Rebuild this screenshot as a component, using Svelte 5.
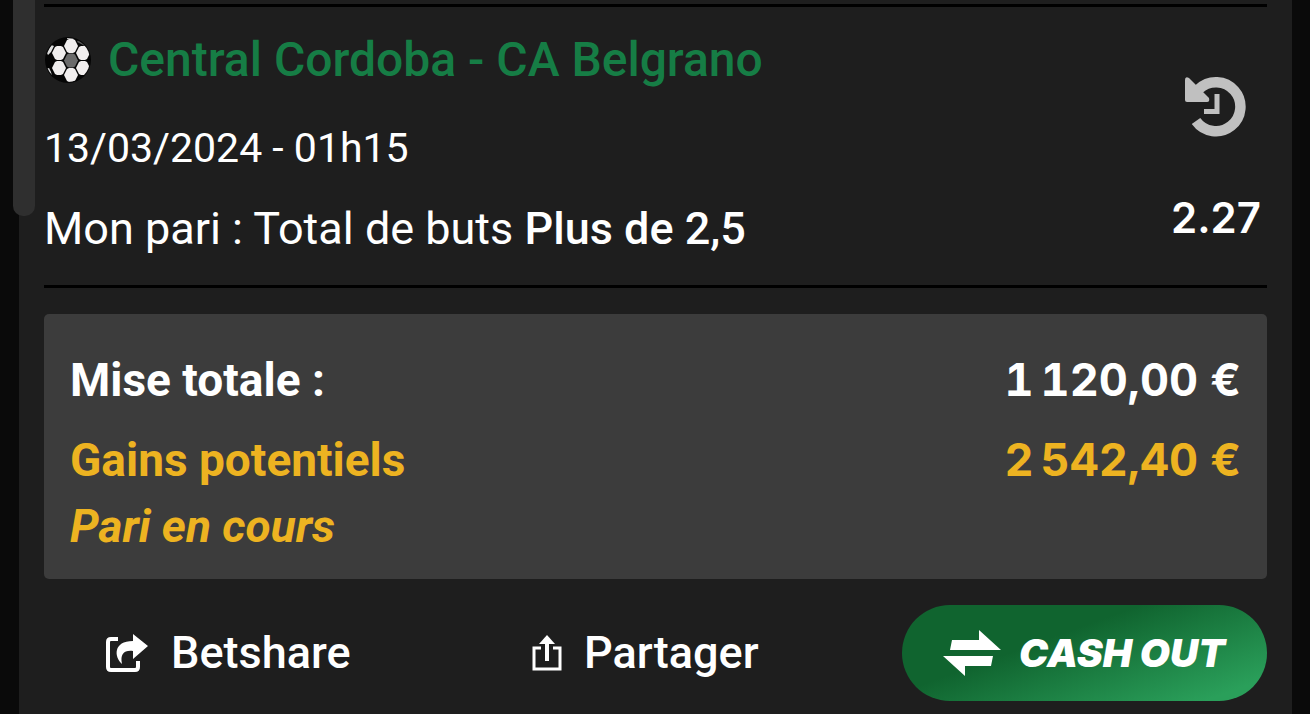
<script>
  const bet = {
    teams: 'Central Cordoba - CA Belgrano',
    date: '13/03/2024 - 01h15',
    market: 'Mon pari : Total de buts',
    pick: 'Plus de 2,5',
    odds: '2.27',
    stake: '1\u2009120,00 €',
    gains: '2\u2009542,40 €',
    status: 'Pari en cours'
  };
  const panels = [[27, 10], [27, 39], [39, 17], [39, 32], [15, 17], [15, 32]];
</script>

<div class="page">
  <div class="thumb"></div>
  <main class="ticket">
    <section class="event">
      <div class="details">
        <h1>
          <svg class="ball" viewBox="0 0 48 48" aria-hidden="true">
            <clipPath id="ball-edge"><circle cx="24" cy="24" r="22" /></clipPath>
            <circle cx="24" cy="24" r="23" fill="#050505" />
            <g clip-path="url(#ball-edge)">
              <path d="M23 1h9v2h-9z" fill="#bbb" />
              <path d="M34 4l8 5 2 5-5-5-6-3z" fill="#555" />
              <path d="M3 17l4-8 3 1-3 6-3 3zM2 33l3-1 2 4 1 4-3-1z" fill="#ddd" />
              {#each panels as [x, y]}
                <path d="M{x - 7} {y}l3-6 2-1h4l2 1 3 6-3 6-2 1h-4l-2-1z" fill="#f1eeee" />
              {/each}
              <path d="M20 24.500l3-6 2-1h4l2 1 3 6-3 6-2 1h-4l-2-1z" fill="#6b6b6b" />
            </g>
          </svg>
          <span>{bet.teams}</span>
        </h1>
        <p class="date">{bet.date}</p>
        <p class="pick">{bet.market} <strong>{bet.pick}</strong></p>
      </div>
      <div class="side">
        <svg class="history" viewBox="0 0 62 62" aria-label="En attente" role="img">
          <path d="M15 14A24.500 24.500 0 1 1 12 46" fill="none" stroke="#c0c0c0" stroke-width="10.500" />
          <path d="M1 5q0-4 4-2l20 20q1 4-2 4H3q-2 0-2-2z" fill="#c0c0c0" />
          <path d="M33 19v17.500H20" fill="none" stroke="#c0c0c0" stroke-width="5" />
        </svg>
        <span class="odds">{bet.odds}</span>
      </div>
    </section>

    <dl class="summary">
      <div class="row">
        <dt>Mise totale :</dt>
        <dd>{bet.stake}</dd>
      </div>
      <div class="row gold">
        <dt>Gains potentiels</dt>
        <dd>{bet.gains}</dd>
      </div>
      <div class="status gold">{bet.status}</div>
    </dl>

    <footer class="actions">
      <button class="plain">
        <svg class="share" viewBox="0 0 44 40" aria-hidden="true">
          <path d="M13 6H6q-3 0-3 3v25q0 3 3 3h24q3 0 3-3v-6" fill="none" stroke="#fff" stroke-width="4" />
          <path d="M28 1l15 12-15 13v-8c-9-1-13 3-11 13C9 24 8 8 28 8z" fill="#fff" />
        </svg>
        Betshare
      </button>
      <button class="plain">
        <svg class="upload" viewBox="0 0 30 38" aria-hidden="true">
          <path d="M9 14H2v21h26V14h-7" fill="none" stroke="#fff" stroke-width="3" />
          <path d="M15 27V5" fill="none" stroke="#fff" stroke-width="4" />
          <path d="M15 1l8 9H7z" fill="#fff" />
        </svg>
        Partager
      </button>
      <button class="cashout">
        <svg class="swap" viewBox="0 0 58 48" aria-hidden="true">
          <path d="M9 11h27V1l22 20H7zM0 27h50l-2 10H22v10z" fill="#fff" />
        </svg>
        CASH OUT
      </button>
    </footer>
  </main>
</div>

<style>
  :global(body) {
    margin: 0;
    background: #0a0a0a;
  }
  .page {
    position: relative;
    min-height: 100vh;
    box-sizing: border-box;
    display: flex;
    padding: 0 18px 0 19px;
    overflow: hidden;
    font-family: Roboto, "Liberation Sans", sans-serif;
    color: #fff;
  }
  .thumb {
    position: absolute;
    left: 13px;
    top: 0;
    width: 22px;
    height: 216px;
    border-radius: 0 0 10px 10px;
    background: #2f2f2f;
  }
  .ticket {
    flex: 1;
    padding: 4px 25px 12px;
    background: #1e1e1e;
  }
  .event {
    display: flex;
    justify-content: space-between;
    border-top: 3px solid #000;
    border-bottom: 3px solid #000;
    padding: 23px 0 30px;
  }
  h1,
  p,
  dl,
  dd {
    margin: 0;
  }
  .details {
    display: flex;
    flex-direction: column;
    gap: 28px;
  }
  h1 {
    display: flex;
    align-items: center;
    gap: 16px;
    font-size: 48px;
    line-height: 60px;
    font-weight: 500;
    color: #167d45;
  }
  .ball {
    width: 48px;
    height: 48px;
  }
  .date {
    margin-top: 3px;
    font-size: 41px;
    line-height: 54px;
  }
  .pick {
    font-size: 45px;
    line-height: 52px;
  }
  strong {
    font-weight: 500;
  }
  .side {
    display: flex;
    flex-direction: column;
    align-items: flex-end;
    gap: 57px;
    padding: 45px 6px 0 0;
  }
  .history {
    width: 62px;
    height: 62px;
    margin-right: 15px;
  }
  .odds {
    font: 600 42px/48px Inter, sans-serif;
  }
  .summary {
    margin-top: 26px;
    padding: 36px 26px 23px;
    border-radius: 5px;
    background: #3c3c3c;
    font-size: 46px;
    line-height: 60px;
    font-weight: 700;
  }
  .row {
    display: flex;
    justify-content: space-between;
    margin-bottom: 20px;
  }
  dd {
    font-family: Inter, sans-serif;
    font-size: 45px;
    font-variant-numeric: tabular-nums;
  }
  .gold {
    color: #edb321;
    margin-bottom: 6px;
  }
  .status {
    font-style: italic;
    margin: 0;
  }
  .actions {
    display: grid;
    grid-template-columns: 427fr 370fr auto;
    align-items: center;
    margin-top: 26px;
    padding-left: 61px;
  }
  button {
    display: flex;
    align-items: center;
    border: 0;
    padding: 0;
    background: none;
    color: #fff;
    font: 500 45px/60px Roboto, sans-serif;
  }
  .plain {
    gap: 22px;
  }
  .share {
    width: 44px;
    height: 40px;
  }
  .upload {
    width: 30px;
    height: 38px;
  }
  .cashout {
    gap: 18px;
    padding: 18px 42px 18px 41px;
    border-radius: 48px;
    background: linear-gradient(160deg, #10642f 38%, #2a9f5a 90%);
    font: italic 900 39px/60px Inter, sans-serif;
  }
  .swap {
    width: 58px;
    height: 48px;
  }
</style>
